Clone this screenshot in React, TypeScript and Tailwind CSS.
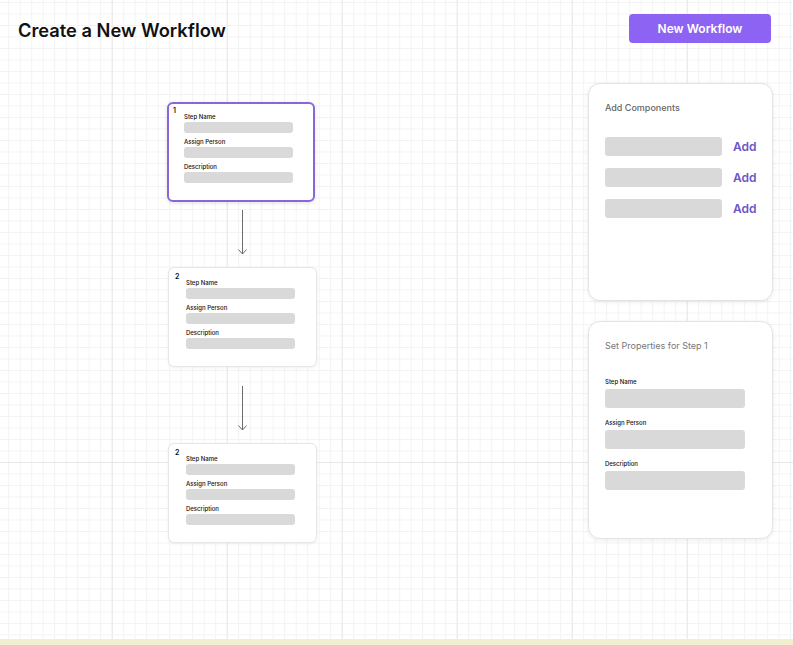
import React from 'react';

const font = { fontFamily: 'Inter, "Noto Sans", sans-serif' };

function Field({ label }: { label: string }) {
  return (
    <div className="flex flex-col">
      <span className="text-[6px] leading-[6px] font-medium text-[#111]">{label}</span>
      <div className="mt-[2px] h-[11px] w-[109px] rounded-[3px] bg-[#d9d9d9]" />
    </div>
  );
}

function StepCard({ num, selected }: { num: number; selected?: boolean }) {
  return (
    <div
      className={
        selected
          ? 'h-[100px] w-[148px] rounded-[6px] border-2 border-[#8b66d9] bg-white pt-[3px] pl-[4px] shadow-[0_1px_4px_rgba(0,0,0,0.12)]'
          : 'ml-[1px] h-[100px] w-[149px] rounded-[6px] border border-[#e6e6e6] bg-white pt-[5px] pl-[6px] shadow-[0_1px_3px_rgba(0,0,0,0.06)]'
      }
    >
      <div className="text-[7px] leading-[7px] font-semibold text-[#111]">{num}</div>
      <div className="ml-[11px] flex flex-col gap-[6px]">
        <Field label="Step Name" />
        <Field label="Assign Person" />
        <Field label="Description" />
      </div>
    </div>
  );
}

function Arrow({ className }: { className: string }) {
  return (
    <svg className={className} width="11" height="45" viewBox="0 0 11 45" fill="none">
      <line x1="5.5" y1="0" x2="5.5" y2="44" stroke="#6b6b6b" strokeWidth="1" />
      <polyline points="1.5,39.5 5.5,44 9.5,39.5" stroke="#6b6b6b" strokeWidth="1" fill="none" />
    </svg>
  );
}

function PropField({ label }: { label: string }) {
  return (
    <div className="flex flex-col">
      <span className="text-[6px] leading-[6px] font-medium text-[#111]">{label}</span>
      <div className="mt-[4px] h-[19px] w-[140px] rounded-[3px] bg-[#d9d9d9]" />
    </div>
  );
}

export default function App() {
  return (
    <div style={font}>
      <div className="h-[639px] overflow-hidden bg-white bg-[linear-gradient(to_right,#e8e8e8_1px,transparent_1px),linear-gradient(to_bottom,#e8e8e8_1px,transparent_1px),linear-gradient(to_right,#f3f3f3_1px,transparent_1px),linear-gradient(to_bottom,#f3f3f3_1px,transparent_1px)] bg-[size:115px_115px,115px_115px,11.5px_11.5px,11.5px_11.5px] bg-[position:-3.3px_2px]">
        <header className="flex items-start justify-between">
          <h1 className="mt-[20px] ml-[18px] text-[18.3px] leading-[20px] font-semibold text-[#111]">
            Create a New Workflow
          </h1>
          <button className="mt-[14px] mr-[22px] h-[29px] w-[142px] rounded-[4px] bg-[#8d63f3] pt-[1px] text-[12px] font-semibold text-white">
            New Workflow
          </button>
        </header>

        <div className="mt-[40px] flex items-start">
          <div className="ml-[167px] flex w-[150px] flex-col items-start pt-[19px]">
            <StepCard num={1} selected />
            <Arrow className="mt-[8px] ml-[70px]" />
            <div className="mt-[12px]">
              <StepCard num={2} />
            </div>
            <Arrow className="mt-[19px] ml-[70px]" />
            <div className="mt-[12px]">
              <StepCard num={2} />
            </div>
          </div>

          <div className="mr-[20px] ml-auto flex w-[185px] flex-col gap-[20px]">
            <section className="h-[218px] rounded-[12px] border border-[#e4e4e4] bg-white pt-[19px] pl-[16px] shadow-[0_1px_4px_rgba(0,0,0,0.08)]">
              <h2 className="text-[9px] leading-[9px] font-medium text-[#666]">Add Components</h2>
              <div className="mt-[25px] flex flex-col gap-[12px]">
                {[0, 1, 2].map((i) => (
                  <div key={i} className="flex items-center">
                    <div className="h-[19px] w-[117px] rounded-[3px] bg-[#d9d9d9]" />
                    <span className="ml-[11px] text-[12px] leading-[12px] font-semibold text-[#6a55c8]">Add</span>
                  </div>
                ))}
              </div>
            </section>

            <section className="h-[218px] rounded-[12px] border border-[#e4e4e4] bg-white pt-[19px] pl-[16px] shadow-[0_1px_4px_rgba(0,0,0,0.08)]">
              <h2 className="text-[9px] leading-[9px] text-[#777]">Set Properties for Step 1</h2>
              <div className="mt-[29px] flex flex-col gap-[12px]">
                <PropField label="Step Name" />
                <PropField label="Assign Person" />
                <PropField label="Description" />
              </div>
            </section>
          </div>
        </div>
      </div>
      <div className="h-[6px] bg-[#f0efd0]" />
    </div>
  );
}
